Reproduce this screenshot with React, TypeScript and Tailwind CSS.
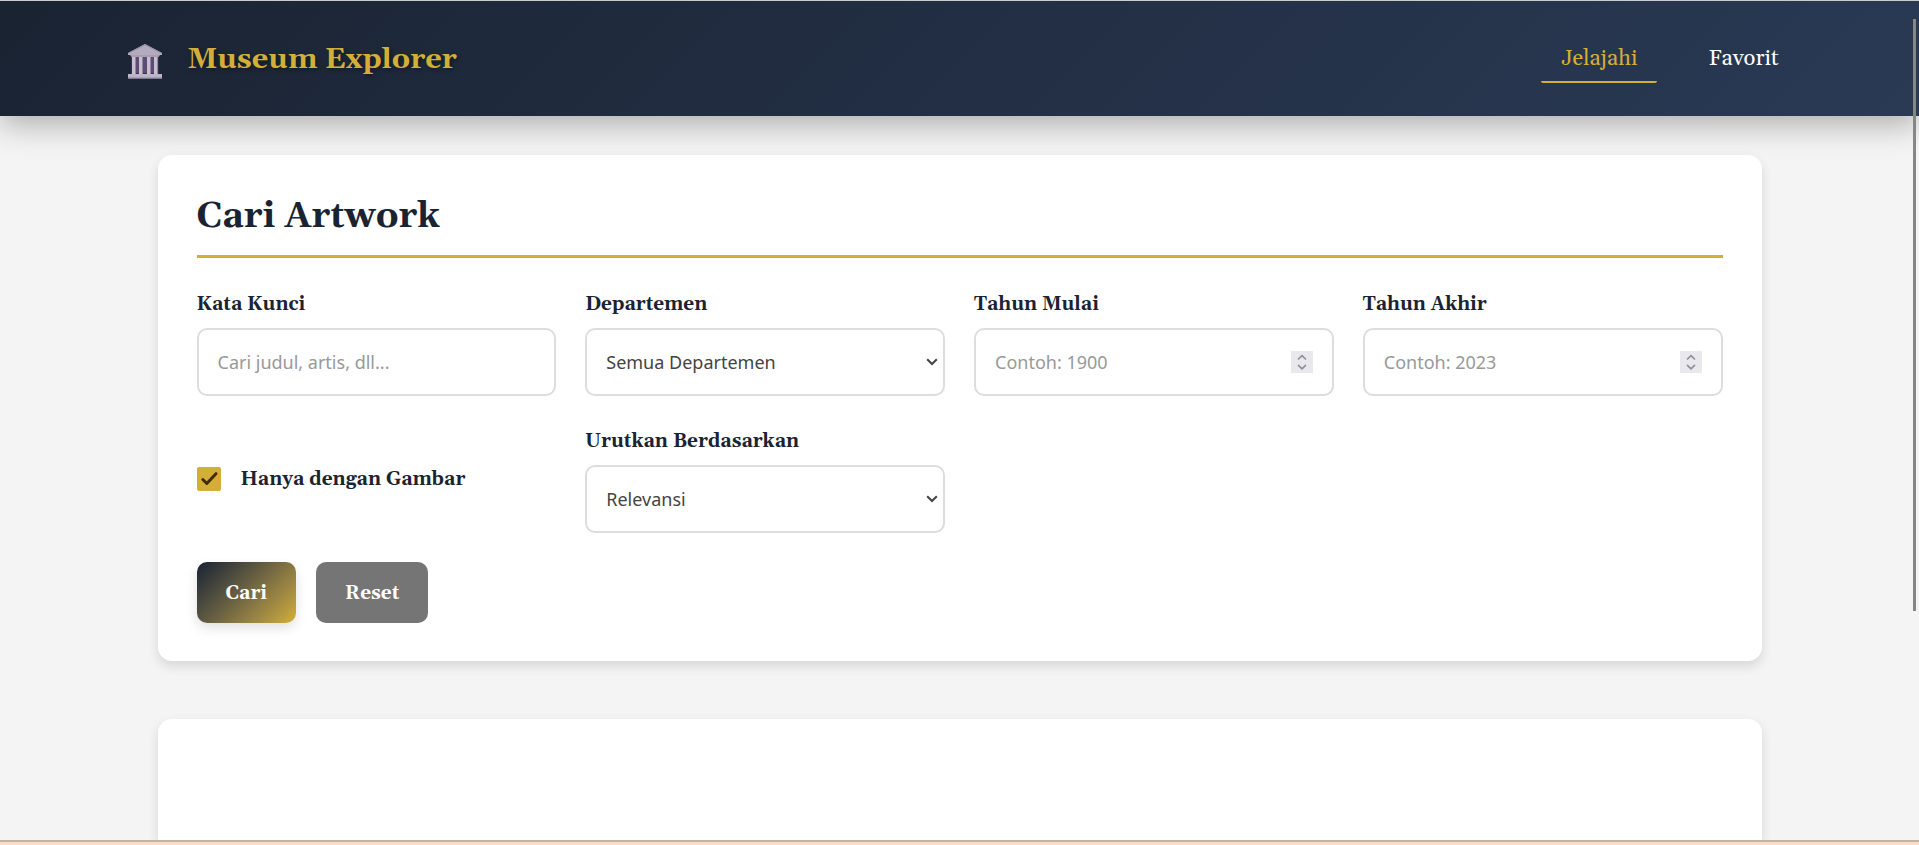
import { useState, type ReactNode } from "react";

function MuseumIcon() {
  return (
    <svg viewBox="0 0 36 36" className="size-9" aria-hidden="true">
      <rect x="4" y="13" width="28" height="18" fill="#3b304b" />
      <rect x="6" y="14" width="24" height="16" fill="#5e4c77" />
      <path d="M18 1 L35 10 V12 H1 V10 Z" fill="#b4acbd" />
      <path d="M18 1 L35 10 V11 L18 2.600 L1 11 V10 Z" fill="#9b91a6" />
      <path d="M3 12 H33 L31.500 14 H4.500 Z" fill="#a79eb2" />
      <rect x="5" y="14" width="4" height="17" fill="#c6bfce" />
      <rect x="12" y="14" width="4" height="17" fill="#c6bfce" />
      <rect x="20" y="14" width="4" height="17" fill="#c6bfce" />
      <rect x="27" y="14" width="4" height="17" fill="#c6bfce" />
      <rect x="8" y="14" width="1" height="17" fill="#9187a0" />
      <rect x="15" y="14" width="1" height="17" fill="#9187a0" />
      <rect x="23" y="14" width="1" height="17" fill="#9187a0" />
      <rect x="30" y="14" width="1" height="17" fill="#9187a0" />
      <rect x="1" y="31" width="34" height="4.500" fill="#bdb5c5" />
      <rect x="1" y="34.500" width="34" height="1" fill="#9087a0" />
    </svg>
  );
}

const serif = "font-[Gelasio,'Liberation_Serif',serif]";
const labelText = "font-[Gelasio,'Liberation_Serif',serif] text-[19px] leading-8 font-bold text-[#1a2332]";
const control =
  "h-[68px] w-full appearance-none rounded-[10px] border-2 border-[#ddd] bg-white px-[19px] text-[18px] text-[#444] placeholder:text-[#999] outline-none focus:border-[#d4af37]";

function Field({ id, label, children }: { id: string; label: string; children: ReactNode }) {
  return (
    <div className="flex flex-col gap-2">
      <label htmlFor={id} className={labelText}>
        {label}
      </label>
      <div className="relative">{children}</div>
    </div>
  );
}

function SelectField({ id, label, options }: { id: string; label: string; options: string[] }) {
  return (
    <Field id={id} label={label}>
      <select id={id} className={control}>
        {options.map((option) => (
          <option key={option}>{option}</option>
        ))}
      </select>
      <svg
        viewBox="0 0 12 8"
        className="pointer-events-none absolute top-[30px] right-[7px] h-2 w-3"
        fill="none"
        stroke="#444"
        strokeWidth="2"
        aria-hidden="true"
      >
        <path d="M1.200 1.200 L6 6 L10.800 1.200" />
      </svg>
    </Field>
  );
}

function YearField({ id, label, placeholder }: { id: string; label: string; placeholder: string }) {
  return (
    <Field id={id} label={label}>
      <input
        id={id}
        type="number"
        placeholder={placeholder}
        className={`${control} [appearance:textfield] [&::-webkit-inner-spin-button]:appearance-none`}
      />
      <svg
        viewBox="0 0 22 22"
        className="pointer-events-none absolute top-[23px] right-[21px] size-[22px]"
        fill="none"
        stroke="#8f8f9d"
        strokeWidth="1.700"
        strokeLinecap="round"
        strokeLinejoin="round"
        aria-hidden="true"
      >
        <rect width="22" height="22" fill="#e9e9ed" stroke="none" />
        <path d="M7.500 8 L11 4.600 L14.500 8 M7.500 14.400 L11 17.800 L14.500 14.400" />
      </svg>
    </Field>
  );
}

export default function App() {
  const [withImage, setWithImage] = useState(true);

  return (
    <div className="flex min-h-screen flex-col overflow-hidden border-t border-[#c8cccb] bg-[#f4f4f4] font-['Noto_Sans',sans-serif]">
      <header className="relative bg-linear-135 from-[#1a2332] to-[#2a3a55] shadow-[0_8px_30px_rgba(0,0,0,0.3)]">
        <div className="mx-auto flex h-[115px] max-w-[1678px] items-center justify-between">
          <div className="flex items-center gap-[25px] pt-0.5 pl-1.5">
            <div className="pt-[3px]">
              <MuseumIcon />
            </div>
            <h1
              className={`${serif} text-[29px] leading-[48px] font-bold text-[#d4af37] [text-shadow:2px_2px_4px_rgba(0,0,0,0.4)]`}
            >
              Museum Explorer
            </h1>
          </div>
          <nav className={`${serif} flex gap-[31px] text-[22px] leading-[30px]`}>
            <a href="#jelajahi" className="rounded-[2px] border-b-2 border-[#d4af37] px-5 pt-[9px] pb-[7px] text-[#d4af37]">
              Jelajahi
            </a>
            <a href="#favorit" className="rounded-[2px] border-b-2 border-transparent px-5 pt-[9px] pb-[7px] text-white">
              Favorit
            </a>
          </nav>
        </div>
      </header>

      <main className="mx-auto flex w-full max-w-[1604px] grow flex-col gap-[58px] pt-[39px]">
        <section className="rounded-[14px] bg-white px-[39px] pt-[39px] pb-[38px] shadow-[0_5px_12px_rgba(0,0,0,0.12)]">
          <h2
            className={`${serif} mb-[30px] border-b-[3px] border-[#d4af37] pb-[15px] text-[36px] leading-[46px] font-bold text-[#1a2332]`}
          >
            Cari Artwork
          </h2>
          <form onSubmit={(event) => event.preventDefault()} onReset={() => setWithImage(true)}>
            <div className="grid grid-cols-4 gap-[29px]">
              <Field id="kata-kunci" label="Kata Kunci">
                <input id="kata-kunci" type="text" placeholder="Cari judul, artis, dll..." className={control} />
              </Field>
              <SelectField id="departemen" label="Departemen" options={["Semua Departemen"]} />
              <YearField id="tahun-mulai" label="Tahun Mulai" placeholder="Contoh: 1900" />
              <YearField id="tahun-akhir" label="Tahun Akhir" placeholder="Contoh: 2023" />
              <label className={`${labelText} flex items-center gap-5`}>
                <span className="relative size-6">
                  <input
                    type="checkbox"
                    checked={withImage}
                    onChange={(event) => setWithImage(event.target.checked)}
                    className="peer block size-6 appearance-none rounded-[2px] border border-[#999] checked:border-[#d4af37] checked:bg-[#d4af37]"
                  />
                  <svg
                    viewBox="0 0 24 24"
                    className="pointer-events-none absolute inset-0 hidden size-6 peer-checked:block"
                    fill="none"
                    stroke="#432c00"
                    strokeWidth="3"
                    strokeLinecap="round"
                    strokeLinejoin="round"
                    aria-hidden="true"
                  >
                    <path d="M5.800 12.500 L9.800 16.500 L19 6.700" />
                  </svg>
                </span>
                Hanya dengan Gambar
              </label>
              <SelectField id="urutkan" label="Urutkan Berdasarkan" options={["Relevansi"]} />
            </div>
            <div className={`${serif} mt-[29px] flex gap-5 text-[19px] leading-[29px] font-bold text-white`}>
              <button
                type="submit"
                className="rounded-[10px] bg-linear-135 from-[#1a2332] to-[#d4af37] px-[29px] pt-[17px] pb-[15px] shadow-[0_5px_12px_rgba(0,0,0,0.12)]"
              >
                Cari
              </button>
              <button type="reset" className="rounded-[10px] bg-[#757575] px-[29px] pt-[17px] pb-[15px]">
                Reset
              </button>
            </div>
          </form>
        </section>
        <section className="grow rounded-t-[14px] bg-white shadow-[0_5px_12px_rgba(0,0,0,0.12)]" />
      </main>

      <footer className="relative h-[5px] border-t-2 border-[#c4b1a2] bg-[#f7dfc7]" />
      <div className="fixed top-[19px] right-[3px] h-[70vh] w-[3px] bg-[#868686]" />
    </div>
  );
}
